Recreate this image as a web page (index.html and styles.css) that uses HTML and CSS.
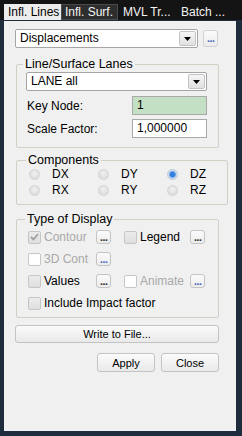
FILE: index.html
```html
<!DOCTYPE html>
<html lang="en">
<head>
    <meta charset="UTF-8">
    <title>Influence Lines</title>
    <link rel="stylesheet" href="styles.css">
</head>
<body>

    <div class="window">
        <!-- Tab strip -->
        <div class="tabs">
            <div class="tab active">Infl. Lines</div>
            <div class="tab hot">Infl. Surf.</div>
            <div class="tab">MVL Tr...</div>
            <div class="tab">Batch ...</div>
        </div>

        <div class="panel">
            <div class="top-row">
                <div class="combo main-combo">
                    <span class="combo-text">Displacements</span>
                    <span class="drop"><svg width="7" height="4" viewBox="0 0 7 4"><path d="M0 0H7L3.5 4Z" fill="#000"/></svg></span>
                </div>
                <button class="dots blue">...</button>
            </div>

            <!-- Lanes -->
            <fieldset class="group lanes">
                <legend>Line/Surface Lanes</legend>
                <div class="combo lane-combo">
                    <span class="combo-text">LANE all</span>
                    <span class="drop"><svg width="7" height="4" viewBox="0 0 7 4"><path d="M0 0H7L3.5 4Z" fill="#000"/></svg></span>
                </div>
                <div class="field">
                    <label>Key Node:</label>
                    <div class="edit key">1</div>
                </div>
                <div class="field">
                    <label>Scale Factor:</label>
                    <div class="edit">1,000000</div>
                </div>
            </fieldset>

            <!-- Components -->
            <fieldset class="group components">
                <legend>Components</legend>
                <div class="radios">
                    <div class="radio"><span class="dot"></span>DX</div>
                    <div class="radio"><span class="dot"></span>DY</div>
                    <div class="radio"><span class="dot on"></span>DZ</div>
                    <div class="radio"><span class="dot"></span>RX</div>
                    <div class="radio"><span class="dot"></span>RY</div>
                    <div class="radio"><span class="dot"></span>RZ</div>
                </div>
            </fieldset>

            <!-- Type of display -->
            <fieldset class="group display">
                <legend>Type of Display</legend>
                <div class="checks">
                    <div class="check off"><span class="box grey"><svg width="9" height="8" viewBox="0 0 9 8"><path d="M1 4L3.5 6.5L8 1" stroke="#a0a0a0" stroke-width="1.8" fill="none"/></svg></span>Contour</div>
                    <button class="dots small">...</button>
                    <div class="check"><span class="box grey"></span>Legend</div>
                    <button class="dots small">...</button>

                    <div class="check off"><span class="box"></span>3D Cont</div>
                    <button class="dots small blue">...</button>
                    <div></div>
                    <div></div>

                    <div class="check"><span class="box grey"></span>Values</div>
                    <button class="dots small">...</button>
                    <div class="check off"><span class="box"></span>Animate</div>
                    <button class="dots small blue">...</button>

                    <div class="check wide"><span class="box grey"></span>Include Impact factor</div>
                </div>
            </fieldset>

            <button class="btn write">Write to File...</button>

            <div class="actions">
                <button class="btn">Apply</button>
                <button class="btn">Close</button>
            </div>
        </div>
    </div>

</body>
</html>
```

FILE: styles.css
```css
body { margin: 0; background-color: #1f2c3e; font-family: "Liberation Sans", Arial, sans-serif; font-size: 12px; color: #000; width: 242px; height: 436px; overflow: hidden; }
.window { padding: 0 6px 5px 4px; }

/* tabs */
.tabs { display: flex; align-items: flex-end; height: 20px; margin: 0 -6px 0 -4px; padding-left: 4px; background-color: #141414; }
.tab { height: 16px; line-height: 16px; color: #f4f4f4; white-space: nowrap; overflow: hidden; box-sizing: border-box; padding-left: 5px; }
.tab.active { width: 57px; padding-left: 4px; background-color: #ececec; color: #000; }
.tab.hot { width: 57px; padding-left: 3px; background-color: #2e2e2e; border: 1px solid #4a4a4a; line-height: 14px; }
.tab:nth-child(3) { width: 58px; }
.tab:nth-child(4) { width: 56px; }

.panel { margin-top: 1px; height: 410px; box-sizing: border-box; padding: 8px 17px 0 11px; background-color: #f0f0f0; }

/* combos */
.top-row { display: flex; align-items: center; gap: 5px; }
.combo { display: flex; align-items: center; justify-content: space-between; box-sizing: border-box; height: 19px; background: #fff; border: 1px solid #a5a5a5; border-radius: 2px; padding: 1px 1px 1px 4px; }
.main-combo { width: 183px; }
.combo-text { line-height: 15px; }
.drop { display: flex; align-items: center; justify-content: center; width: 17px; height: 15px; box-sizing: border-box; border: 1px solid #c4c4c4; border-radius: 2px; background: linear-gradient(#f6f6f6, #e0e0e0); }

.dots { display: flex; align-items: flex-end; justify-content: center; box-sizing: border-box; width: 15px; height: 17px; padding: 0 0 4px; border: 1px solid #d2d2d2; border-radius: 3px; background: linear-gradient(#fbfbfb, #ececec); font-family: "DejaVu Sans", sans-serif; font-size: 9px; font-weight: bold; line-height: 6px; color: #333; letter-spacing: -1px; }
.dots.blue { color: #4d68c0; }
.dots.small { width: 15px; height: 14px; padding-bottom: 2px; border-color: #c4c4c4; }

/* groups */
.group { margin: 9px 0 0 1px; padding: 0 9px 9px 9px; border: 1px solid #d2cfc6; border-radius: 2px; }
.group legend { margin-left: -3px; padding: 0 2px; font-size: 12.5px; line-height: 14px; }

.lane-combo { width: 181px; height: 19px; margin-top: 1px; }
.field { display: flex; align-items: center; justify-content: space-between; width: 181px; margin-top: 5px; }
.field + .field { margin-top: 4px; }
.field label { padding-left: 1px; }
.edit { box-sizing: border-box; width: 75px; height: 19px; line-height: 17px; padding-left: 4px; background: #fff; border: 1px solid #a9a9a9; }
.edit.key { background-color: #c4e0c4; }

.components { margin-top: 5px; padding: 0 0 7px 12px; }
.radios { display: grid; grid-template-columns: 69px 69px 60px; row-gap: 2px; }
.radio { display: flex; align-items: center; height: 14px; }
.dot { box-sizing: border-box; width: 11px; height: 11px; margin-right: 12px; border-radius: 50%; border: 1px solid #d4d4d4; background: radial-gradient(circle at 50% 40%, #f0f0f0, #d6d6d6); }
.dot.on { border-color: #b8c8dc; background: radial-gradient(circle, #2f7ad8 0, #3b86e0 40%, #cfdcec 60%, #eef2f6 100%); }

.display { margin-top: 7px; padding: 0 0 3px 11px; }
.checks { display: grid; grid-template-columns: 68px 28px 66px 15px; grid-auto-rows: 22px; align-items: center; }
.check { display: flex; align-items: center; white-space: nowrap; }
.check.off { color: #a9a9a9; }
.check.wide { grid-column: 1 / 5; }
.box { display: flex; align-items: center; justify-content: center; box-sizing: border-box; width: 13px; height: 13px; margin-right: 3px; border: 1px solid #c6c6c6; border-radius: 2px; background: #fff; }
.box.grey { background: linear-gradient(#ececec, #dedede); }

/* buttons */
.btn { box-sizing: border-box; height: 18px; padding: 0; border: 1px solid #c3c3c3; border-radius: 3px; background: linear-gradient(#fbfbfb, #e9e9e9); font-family: "Liberation Sans", Arial, sans-serif; font-size: 11px; color: #000; }
.write { display: block; width: 204px; margin-top: 7px; }
.actions { display: flex; justify-content: flex-end; gap: 6px; margin-top: 10px; }
.actions .btn { width: 58px; height: 19px; }
```
